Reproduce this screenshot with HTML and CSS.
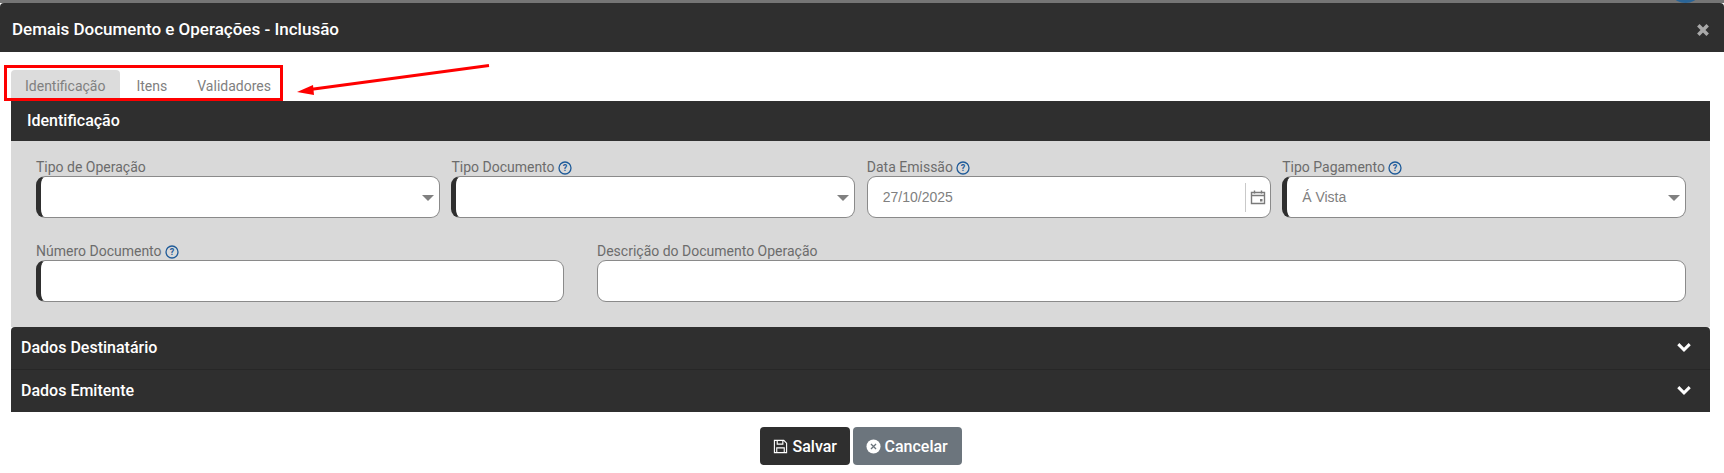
FILE: index.html
```html
<!DOCTYPE html>
<html lang="pt-BR">
<head>
<meta charset="utf-8">
<title>Demais Documento e Operações - Inclusão</title>
<link rel="stylesheet" href="styles.css">
</head>
<body>
<div class="backdrop"><span class="backdrop-badge"></span></div>
<header class="modal-header">
  <h1 class="modal-title">Demais Documento e Operações - Inclusão</h1>
  <svg class="close-icon" viewBox="0 0 12 12" aria-label="Fechar"><path d="M2 2l8 8M10 2l-8 8"/></svg>
</header>
<main class="modal-body">
  <nav class="tabs">
    <a class="tab tab-active">Identificação</a>
    <a class="tab">Itens</a>
    <a class="tab">Validadores</a>
  </nav>
  <section>
    <h2 class="section-title">Identificação</h2>
    <div class="section-body">
      <div class="row row-four">
        <div class="field">
          <label class="field-label">Tipo de Operação</label>
          <div class="control required"><span class="caret"></span></div>
        </div>
        <div class="field">
          <label class="field-label">Tipo Documento <svg class="help" viewBox="0 0 14 14"><circle cx="7" cy="7" r="6"/><text x="7" y="10" class="help-mark">?</text></svg></label>
          <div class="control required"><span class="caret"></span></div>
        </div>
        <div class="field">
          <label class="field-label">Data Emissão <svg class="help" viewBox="0 0 14 14"><circle cx="7" cy="7" r="6"/><text x="7" y="10" class="help-mark">?</text></svg></label>
          <div class="control">
            <span class="value">27/10/2025</span>
            <span class="date-sep"></span>
            <svg class="calendar" viewBox="0 0 16 16"><path d="M1.5 3.5h13v11h-13zM1.5 6.5h13"/><path d="M4.5 1.5v3M11.5 1.5v3"/><rect x="10" y="10" width="2.5" height="2.5" class="calendar-dot"/></svg>
          </div>
        </div>
        <div class="field">
          <label class="field-label">Tipo Pagamento <svg class="help" viewBox="0 0 14 14"><circle cx="7" cy="7" r="6"/><text x="7" y="10" class="help-mark">?</text></svg></label>
          <div class="control required"><span class="value">Á Vista</span><span class="caret"></span></div>
        </div>
      </div>
      <div class="row row-two">
        <div class="field">
          <label class="field-label">Número Documento <svg class="help" viewBox="0 0 14 14"><circle cx="7" cy="7" r="6"/><text x="7" y="10" class="help-mark">?</text></svg></label>
          <div class="control required"></div>
        </div>
        <div class="field">
          <label class="field-label">Descrição do Documento Operação</label>
          <div class="control"></div>
        </div>
      </div>
    </div>
  </section>
  <section class="accordion">
    <div class="accordion-item">
      <span>Dados Destinatário</span>
      <svg class="chevron" viewBox="0 0 14 10"><path d="M2 2.5l5 5 5-5"/></svg>
    </div>
    <div class="accordion-item">
      <span>Dados Emitente</span>
      <svg class="chevron" viewBox="0 0 14 10"><path d="M2 2.5l5 5 5-5"/></svg>
    </div>
  </section>
  <div class="actions">
    <button class="btn btn-dark">
      <svg class="btn-icon" viewBox="0 0 16 16"><path class="save-outline" d="M1.5 1.5h10l3 3v10h-13zM4.5 1.5v4h6v-4M4 14.5v-5h8v5"/></svg>
      Salvar
    </button>
    <button class="btn btn-grey">
      <svg class="btn-icon" viewBox="0 0 16 16"><circle cx="8" cy="8" r="7.5" class="cancel-disc"/><path class="cancel-x" d="M5.3 5.3l5.4 5.4M10.7 5.3l-5.4 5.4"/></svg>
      Cancelar
    </button>
  </div>
</main>
<div class="annotation">
  <div class="annotation-box"></div>
  <svg class="annotation-arrow" viewBox="0 0 196 34"><path class="arrow-line" d="M193 3.5L14 27.5"/><path class="arrow-head" d="M1 30L17 23L18 33z"/></svg>
</div>
</body>
</html>
```

FILE: styles.css
```css
* { box-sizing: border-box; }
html, body { margin: 0; padding: 0; background: #fff; }
body {
  font-family: Roboto, "Liberation Sans", sans-serif;
  color: #6c6c6c;
  height: 473px;
  overflow: hidden;
  position: relative;
}
.backdrop {
  height: 3px;
  background: #757575;
  position: relative;
  overflow: hidden;
}
.backdrop-badge {
  position: absolute;
  left: 1674px;
  top: -10px;
  width: 23px;
  height: 13px;
  border-radius: 50%;
  background: #2a6496;
}
.modal-header {
  height: 49px;
  background: #2f2f2f;
  display: flex;
  align-items: center;
  justify-content: space-between;
  padding: 0 14px 0 12px;
  border-radius: 4px 4px 0 0;
}
.modal-title {
  margin: 0 0 -2px;
  color: #fff;
  font-size: 17px;
  font-weight: 500;
  line-height: 20px;
}
.close-icon {
  width: 14px;
  height: 14px;
  fill: none;
  stroke: #a9a9a9;
  stroke-width: 3;
  margin-bottom: -5px;
}
.modal-body { padding: 18px 14px 0 11px; }
.tabs {
  display: flex;
  height: 31px;
  align-items: stretch;
}
.tab {
  font-size: 14px;
  line-height: 31px;
  color: #808080;
  padding: 1px 15px 0;
}
.tab-active {
  background: #dcdcdc;
  border-radius: 4px 4px 0 0;
  padding: 1px 14.5px 0 14px;
  margin-right: 1.5px;
}
.section-title {
  margin: 0;
  height: 40px;
  background: #2f2f2f;
  color: #fff;
  font-size: 16px;
  font-weight: 500;
  line-height: 40px;
  padding-left: 16px;
}
.section-body {
  background: #d9d9d9;
  padding: 16px 24px 25px 25px;
}
.row { display: grid; }
.row-four { grid-template-columns: repeat(4, 1fr); column-gap: 11.6px; }
.row-two { grid-template-columns: 528px 1fr; column-gap: 33px; margin-top: 23px; }
.field-label {
  display: flex;
  align-items: center;
  gap: 3px;
  height: 19px;
  padding-top: 2px;
  font-size: 14px;
  line-height: 17px;
  color: #6c6c6c;
}
.help {
  width: 14px;
  height: 14px;
  fill: none;
  stroke: #1f5b99;
  stroke-width: 1.3;
}
.help-mark {
  font-family: Roboto, sans-serif;
  font-size: 9px;
  font-weight: 700;
  text-anchor: middle;
  fill: #1f5b99;
  stroke: none;
}
.control {
  position: relative;
  height: 42px;
  background: #fff;
  border: 1px solid #8a8a8a;
  border-radius: 9px;
  display: flex;
  align-items: center;
  padding: 0 9px 0 15px;
}
.control.required { border-left: 5px solid #2f2f2f; }
.value {
  font-family: "Liberation Sans", Arial, sans-serif;
  font-size: 14px;
  color: #808080;
  flex: 1;
}
.caret {
  position: absolute;
  right: 5px;
  top: 18px;
  width: 0;
  height: 0;
  border-left: 6px solid transparent;
  border-right: 6px solid transparent;
  border-top: 6px solid #808080;
}
.date-sep {
  width: 1px;
  height: 29px;
  background: #c9c9c9;
  margin-right: 4px;
}
.calendar {
  width: 16px;
  height: 16px;
  fill: none;
  stroke: #7a7a7a;
  stroke-width: 1.4;
  margin-right: -5px;
}
.calendar-dot { fill: #7a7a7a; stroke: none; }
.accordion { background: #2f2f2f; border-radius: 4px 4px 0 0; }
.accordion-item {
  height: 42px;
  display: flex;
  align-items: center;
  justify-content: space-between;
  padding: 0 18px 2px 10px;
  color: #fff;
  font-size: 16px;
  font-weight: 500;
}
.accordion-item + .accordion-item {
  height: 43px;
  border-top: 1px solid #272727;
}
.chevron {
  width: 16px;
  height: 12px;
  fill: none;
  stroke: #fff;
  stroke-width: 2.6;
}
.actions {
  display: flex;
  justify-content: center;
  gap: 3px;
  margin-top: 15px;
}
.btn {
  height: 38px;
  border: 0;
  border-radius: 4px;
  display: flex;
  align-items: center;
  gap: 5px;
  font-family: inherit;
  font-size: 16px;
  font-weight: 500;
  color: #fff;
  padding: 0 12px 0 13px;
}
.btn-dark { background: #2f2f2f; width: 90px; }
.btn-grey { background: #6c757d; width: 109px; gap: 4px; }
.btn-icon { width: 15px; height: 15px; flex: none; }
.save-outline { fill: none; stroke: #fff; stroke-width: 1.2; }
.cancel-disc { fill: #fff; }
.cancel-x { fill: none; stroke: #6c757d; stroke-width: 1.4; }
.annotation { position: absolute; left: 0; top: 0; }
.annotation-box {
  position: absolute;
  left: 4px;
  top: 65px;
  width: 279px;
  height: 36px;
  border: 3px solid #fe0000;
}
.annotation-arrow {
  position: absolute;
  left: 296px;
  top: 62px;
  width: 196px;
  height: 34px;
}
.arrow-line { fill: none; stroke: #fe0000; stroke-width: 3; }
.arrow-head { fill: #fe0000; }
```
